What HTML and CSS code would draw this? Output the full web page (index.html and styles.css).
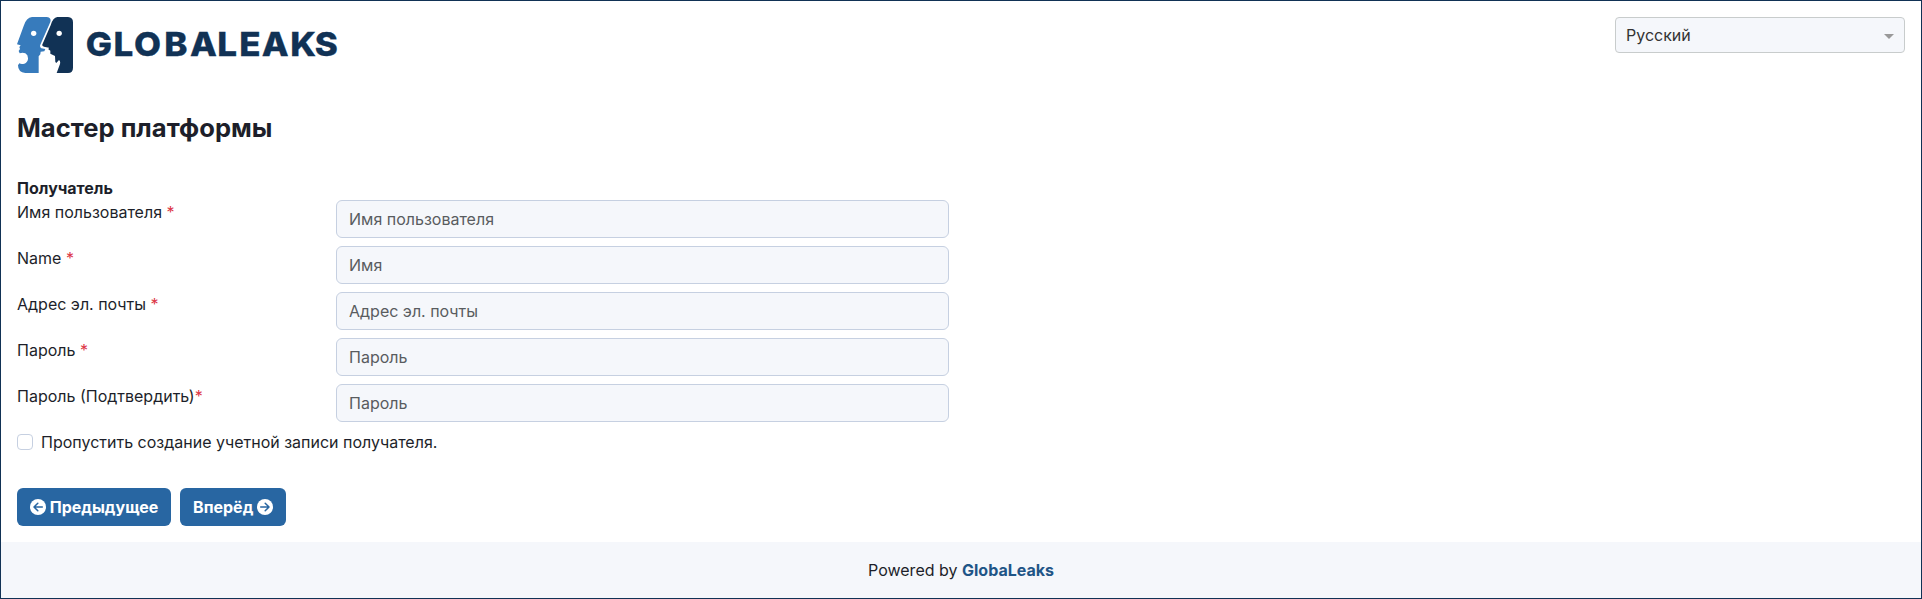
FILE: index.html
```html
<!DOCTYPE html>
<html lang="ru">
<head>
<meta charset="utf-8">
<title>GlobaLeaks</title>
<link rel="stylesheet" href="styles.css">
</head>
<body>
<div class="page">
  <header class="header">
    <svg class="logo" width="324" height="56" viewBox="0 0 324 56" role="img" aria-label="GlobaLeaks">
      <g transform="translate(-3 -3) scale(.33333)">
        <path fill="#377bbc" d="M54 9H97Q113 10 109 24L79 92Q76 99 82 103L94 105L91 112L80 113L79 121L74 127V177H34Q12 175 12 154L16 148Q22 152 31 149Q41 145 42 135Q43 123 34 118Q26 115 17 118L14 111L18 105L16 99L20 94L9 91L29 36Q37 10 54 9Z"/>
        <path fill="#113255" d="M130 9H162Q177 10 177 25V161Q177 177 162 177H128L138 150Q140 141 135 138L127 147L124 144L123 126L109 119V110L103 106L105 101L90 98Q82 96 86 89L110 34Q117 10 130 9Z"/>
        <circle fill="#fff" cx="59" cy="58" r="8"/>
        <circle fill="#fff" cx="135.500" cy="58" r="8"/>
      </g>
      <text class="logo-text" transform="scale(1.06 1)" y="39.500" x="64.800 91 110.400 139 163.200 189 209.700 231 257.700 281">GLOBALEAKS</text>
    </svg>
    <div class="language">
      <span>Русский</span>
      <span class="caret"></span>
    </div>
  </header>
  <main class="main">
    <h1 class="title">Мастер платформы</h1>
    <form class="form">
      <div class="section">Получатель</div>
      <div class="row"><label for="username">Имя пользователя <span class="req">*</span></label><input id="username" placeholder="Имя пользователя"></div>
      <div class="row"><label for="name">Name <span class="req">*</span></label><input id="name" placeholder="Имя"></div>
      <div class="row"><label for="email">Адрес эл. почты <span class="req">*</span></label><input id="email" placeholder="Адрес эл. почты"></div>
      <div class="row"><label for="pw">Пароль <span class="req">*</span></label><input id="pw" type="password" placeholder="Пароль"></div>
      <div class="row"><label for="pw2">Пароль (Подтвердить)<span class="req">*</span></label><input id="pw2" type="password" placeholder="Пароль"></div>
      <label class="skip"><input class="check" type="checkbox"><span>Пропустить создание учетной записи получателя.</span></label>
      <div class="actions">
        <button class="btn" type="button"><svg class="icon" viewBox="0 0 16 16"><circle cx="8" cy="8" r="8" fill="#fff"/><path d="M12.300 8H4.300M7.800 4.200L4 8L7.800 11.800"/></svg><span>Предыдущее</span></button>
        <button class="btn" type="button"><span>Вперёд</span><svg class="icon" viewBox="0 0 16 16"><circle cx="8" cy="8" r="8" fill="#fff"/><path d="M3.700 8H11.700M8.200 4.200L12 8L8.200 11.800"/></svg></button>
      </div>
    </form>
  </main>
  <footer class="footer"><span>Powered by <a class="link" href="#">GlobaLeaks</a></span></footer>
</div>
</body>
</html>
```
FILE: styles.css
```css
* { box-sizing: border-box; }
body {
  margin: 0;
  font: 16px/24px Inter, "Liberation Sans", sans-serif;
  color: #1d1f2a;
  background: #fff;
}
.page {
  height: 599px;
  border: 1px solid #113255;
  display: flex;
  flex-direction: column;
}
.header {
  display: flex;
  justify-content: space-between;
  align-items: flex-start;
  padding: 16px 16px 0;
}
.logo { display: block; }
.logo-text {
  font: 800 33px Inter, sans-serif;
  fill: #113255;
  stroke: #113255;
  stroke-width: 0.3px;
}
.language {
  width: 290px;
  height: 36px;
  padding: 0 10px;
  border: 1px solid #c8cccc;
  border-radius: 4px;
  background: #f5f7fb;
  color: #333;
  display: flex;
  align-items: center;
  justify-content: space-between;
}
.caret {
  border: 5px solid transparent;
  border-top-color: #999;
  border-bottom: 0;
  margin-top: 2px;
}
.main { flex: 1; padding: 39px 16px 0; }
.title {
  margin: 0 0 32px;
  font-size: 25.6px;
  line-height: 32px;
  font-weight: 700;
}
.section { font-weight: 700; }
.row {
  display: grid;
  grid-template-columns: 319px 613px;
  align-items: start;
  margin-bottom: 8px;
}
.row input {
  height: 38px;
  padding: 6px 12px;
  border: 1px solid #c6d0e1;
  border-radius: 6px;
  background: #f5f7fb;
  font: inherit;
}
.row input::placeholder { color: #595c5f; opacity: 1; }
.req { color: #dc3545; }
.skip {
  display: flex;
  align-items: center;
  gap: 8px;
}
.check {
  appearance: none;
  width: 16px;
  height: 16px;
  margin: 0;
  border: 1px solid #c6d0e1;
  border-radius: 4px;
  background: #fff;
}
.actions { display: flex; gap: 9px; margin-top: 34px; }
.btn {
  height: 38px;
  padding: 0 12.8px 0 13px;
  border: 0;
  border-radius: 6px;
  background: #2866a2;
  color: #fff;
  font: 700 16px/24px Inter, "Liberation Sans", sans-serif;
  display: flex;
  align-items: center;
  gap: 3.7px;
}
.icon { width: 16px; height: 16px; flex: none; }
.icon path {
  fill: none;
  stroke: #2866a2;
  stroke-width: 1.5;
  stroke-linecap: round;
  stroke-linejoin: round;
}
.footer {
  height: 56px;
  background: #f5f7fb;
  display: flex;
  align-items: center;
  justify-content: center;
}
.link { color: #1f5587; font-weight: 700; text-decoration: none; }
```
